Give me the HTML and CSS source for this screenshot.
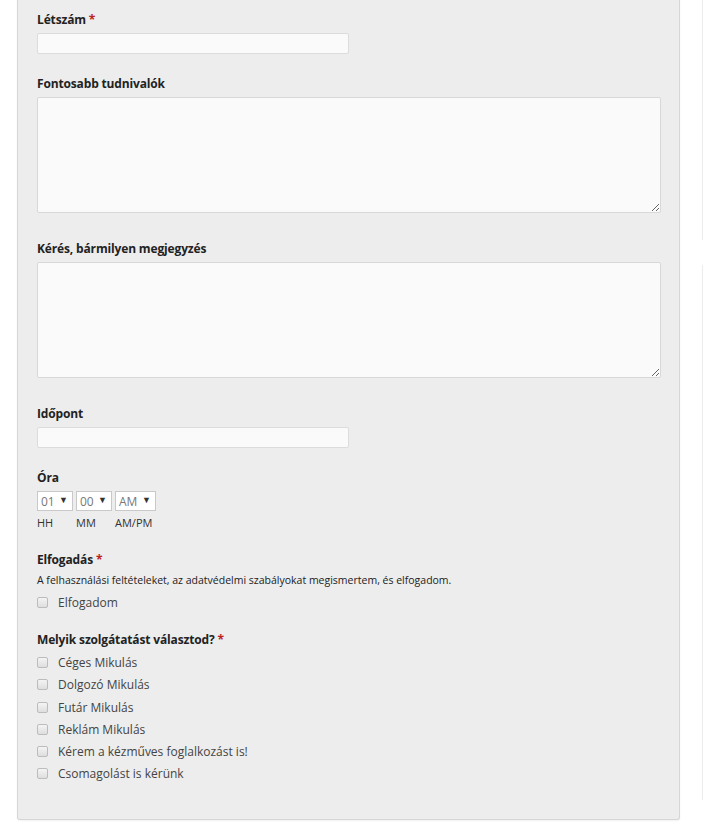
FILE: index.html
```html
<!DOCTYPE html>
<html lang="hu">
<head>
<meta charset="utf-8">
<link rel="stylesheet" href="styles.css">
</head>
<body>
<div class="page">
  <form class="panel">
    <div class="field field-input">
      <label class="label">Létszám <span class="req">*</span></label>
      <input class="text short" type="text">
    </div>
    <div class="field field-area">
      <label class="label">Fontosabb tudnivalók</label>
      <textarea class="area"></textarea>
    </div>
    <div class="field field-area">
      <label class="label">Kérés, bármilyen megjegyzés</label>
      <textarea class="area"></textarea>
    </div>
    <div class="field field-input">
      <label class="label">Időpont</label>
      <input class="text short" type="text">
    </div>
    <div class="field field-time">
      <label class="label">Óra</label>
      <div class="time-row">
        <div class="time-col">
          <span class="sel sel-hh">01<span class="arrow">▼</span></span>
          <span class="sub">HH</span>
        </div>
        <div class="time-col">
          <span class="sel sel-mm">00<span class="arrow">▼</span></span>
          <span class="sub">MM</span>
        </div>
        <div class="time-col">
          <span class="sel sel-ap">AM<span class="arrow">▼</span></span>
          <span class="sub">AM/PM</span>
        </div>
      </div>
    </div>
    <div class="field field-accept">
      <label class="label">Elfogadás <span class="req">*</span></label>
      <p class="desc">A felhasználási feltételeket, az adatvédelmi szabályokat megismertem, és elfogadom.</p>
      <label class="check"><input type="checkbox" class="box"><span>Elfogadom</span></label>
    </div>
    <div class="field field-checks">
      <label class="label">Melyik szolgátatást választod? <span class="req">*</span></label>
      <label class="check"><input type="checkbox" class="box"><span>Céges Mikulás</span></label>
      <label class="check"><input type="checkbox" class="box"><span>Dolgozó Mikulás</span></label>
      <label class="check"><input type="checkbox" class="box"><span>Futár Mikulás</span></label>
      <label class="check"><input type="checkbox" class="box"><span>Reklám Mikulás</span></label>
      <label class="check"><input type="checkbox" class="box"><span>Kérem a kézműves foglalkozást is!</span></label>
      <label class="check"><input type="checkbox" class="box"><span>Csomagolást is kérünk</span></label>
    </div>
  </form>
  <aside class="side">
    <div class="side-box one"></div>
    <div class="side-box two"></div>
  </aside>
</div>
</body>
</html>
```

FILE: styles.css
```css
* { box-sizing: border-box; }
html, body { margin: 0; padding: 0; background: #fff; }
body {
  font-family: "Open Sans", "Noto Sans", sans-serif;
  color: #333;
  width: 704px;
  height: 827px;
  overflow: hidden;
}
.page {
  display: flex;
  align-items: flex-start;
}
.panel {
  margin-left: 17px;
  width: 663px;
  background: #ededed;
  border: 1px solid #d6d6d6;
  border-top: none;
  border-radius: 0 0 3px 3px;
  box-shadow: 0 1px 2px rgba(0,0,0,0.06);
  padding: 10px 19px 34px 19px;
  display: flex;
  flex-direction: column;
}
.field { display: flex; flex-direction: column; align-items: flex-start; }
.field-input { margin-bottom: 20px; }
.field-area { margin-bottom: 26px; }
.field-time { margin-bottom: 20px; }
.field-accept { margin-bottom: 17px; }
.label {
  font-size: 12px;
  font-weight: 700;
  line-height: 18px;
  padding-top: 1px;
  color: #222;
  margin-bottom: 4px;
  letter-spacing: -0.15px;
}
.req { color: #b22; }
.text {
  display: block;
  height: 21px;
  background: #fafafa;
  border: 1px solid #dcdcdc;
  border-radius: 2px;
  margin: 0;
  padding: 0 4px;
}
.short { width: 312px; }
.area {
  display: block;
  width: 624px;
  height: 116px;
  background: #fafafa;
  border: 1px solid #d8d8d8;
  border-radius: 2px;
  margin: 0;
  resize: vertical;
}
.time-row { display: flex; gap: 3px; }
.time-col { display: flex; flex-direction: column; align-items: flex-start; }
.sel {
  display: flex;
  align-items: center;
  justify-content: space-between;
  height: 20px;
  padding: 0 4px 0 3px;
  background: #fff;
  border: 1px solid #c9c9c9;
  font-size: 12px;
  color: #777;
}
.sel-hh, .sel-mm { width: 36px; }
.sel-ap { width: 41px; }
.arrow { font-size: 9px; color: #333; margin-top: -3px; }
.sub {
  font-size: 11px;
  color: #333;
  line-height: 14px;
  margin-top: 5px;
}
.desc {
  margin: -3px 0 1px 0;
  font-size: 10.5px;
  line-height: 20px;
  color: #222;
}
.check {
  display: flex;
  align-items: center;
  height: 22.3px;
  font-size: 12px;
  color: #444;
}
.field-checks .label { margin-bottom: 2px; }
.box {
  appearance: none;
  -webkit-appearance: none;
  width: 11px;
  height: 11px;
  margin: 0 10px 0 0;
  border: 1px solid #bcbcbc;
  border-radius: 2px;
  background: linear-gradient(#f4f4f4, #dedede);
}
.side {
  margin-left: 22px;
  flex: 1;
  display: flex;
  flex-direction: column;
  gap: 25px;
}
.side-box { border-left: 1px solid #ececec; }
.side-box.one { height: 240px; }
.side-box.two { height: 535px; }
```
